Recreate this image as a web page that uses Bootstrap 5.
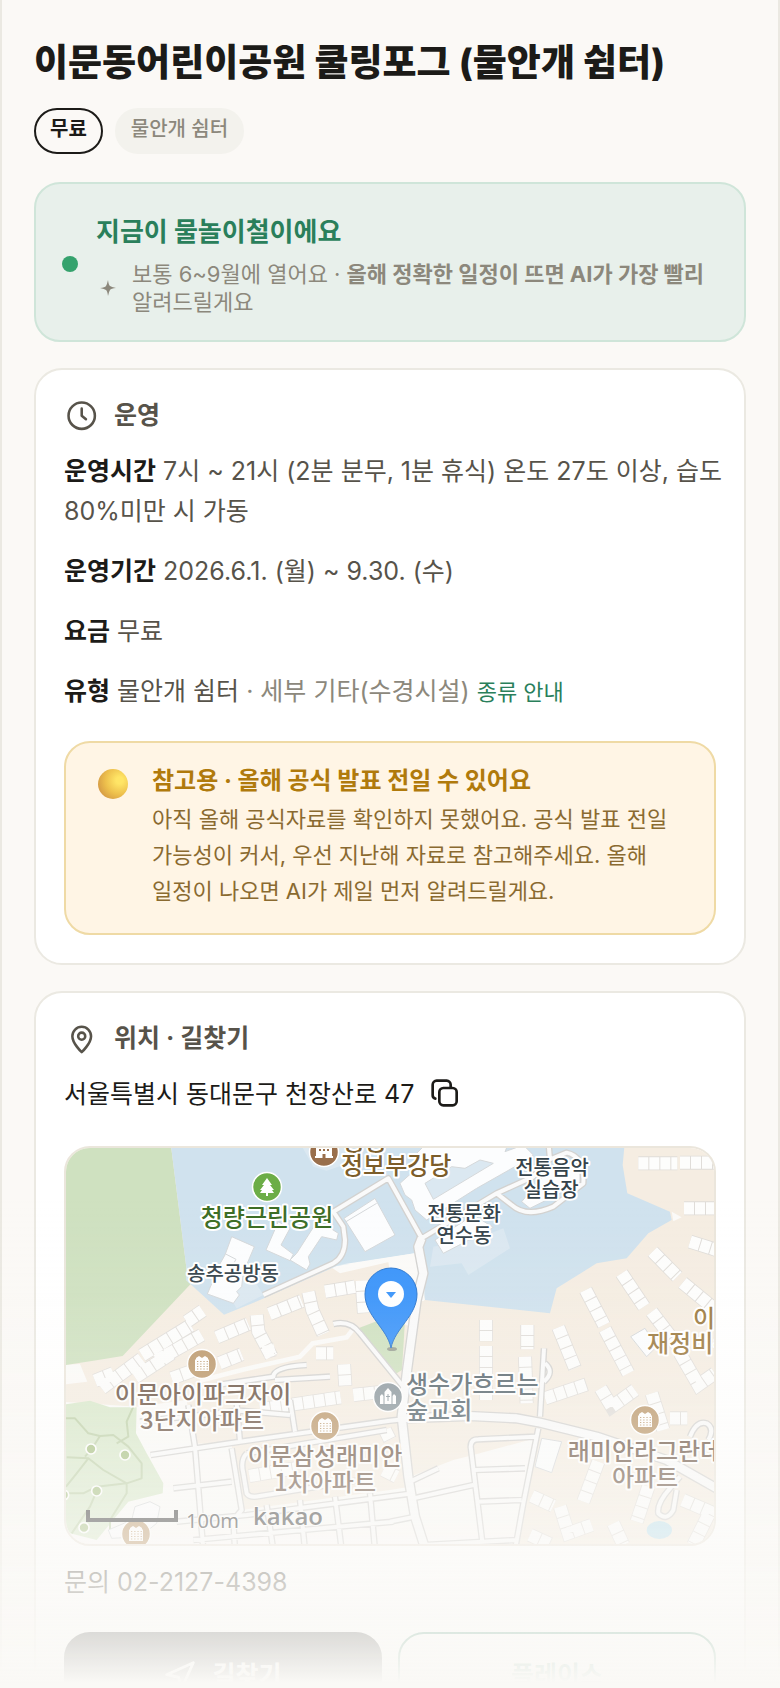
<!DOCTYPE html>
<html lang="ko">
<head>
  <meta charset="UTF-8">
  <meta name="viewport" content="width=device-width, initial-scale=1.0">
  <title>이문동어린이공원 쿨링포그</title>
  <link href="https://cdn.jsdelivr.net/npm/bootstrap@5.3.0/dist/css/bootstrap.min.css" rel="stylesheet">
  <style>
    body { background: #fbf9f6; color: #1c1b18; font-family: Inter, "Noto Sans CJK KR", sans-serif; word-break: keep-all; }
    .sheet { height: 100vh; overflow: hidden; border: solid #ebe9e2; border-width: 0 2px; padding: 33px 32px 0; }
    .sheet h1 { font-size: 37px; line-height: 60px; font-weight: 800; margin-bottom: 15px; }
    .ink { color: #1c1b18; }
    .soft { color: #8c887c; }

    .chip { height: 46px; padding: 0 14px; line-height: 39px; font-size: 20px; border-radius: 23px; border: 2px solid #f3f2ed; background: #f3f2ed; color: #8c887c; font-weight: 500; }
    .chip-free { border-color: #1c1b18; background: transparent; color: #1c1b18; font-weight: 700; }

    .season { background: #e8f0eb; border: 2px solid #cfe5d9; border-radius: 26px; padding: 28px 26px 24px; gap: 18px; margin: 28px 0 26px; }
    .season h2 { color: #2a7f5b; font-size: 26px; line-height: 40px; font-weight: 700; margin-bottom: 8px; }
    .season p { color: #8c887c; font-size: 22px; line-height: 28px; }
    .season p b { font-weight: 700; }
    .dot { width: 16px; height: 16px; border-radius: 50%; background: #35a26d; }

    .panel { background: #fff; border: 2px solid #ebe9e2; border-radius: 28px; padding: 29px 28px 28px; margin-bottom: 26px; font-size: 25px; line-height: 40px; color: #57534a; }
    .panel-title { gap: 16px; height: 32px; margin-bottom: 20px; }
    .panel-title h2 { font-size: 25px; line-height: 32px; font-weight: 700; margin: 0; }
    .facts { margin: 0 -8px 29px 0; }
    .facts p { margin-bottom: 20px; }
    .facts a { color: #2a7f5b; font-size: 22px; text-decoration: none; }

    .notice { background: #fff5e5; border: 2px solid #efdaa5; border-radius: 26px; padding: 20px 24px 24px 32px; gap: 24px; }
    .notice h3 { color: #b07a0c; font-size: 24px; line-height: 36px; font-weight: 700; margin-bottom: 2px; }
    .notice p { color: #8a6a30; font-size: 22px; line-height: 36px; }
    .orb { width: 30px; height: 30px; margin-top: 6px; border-radius: 50%; background: radial-gradient(circle at 72% 38%, #ffe566 0 12%, #edbf4c 50%, #d9a146 75%, #d98b60 100%); }

    .map-box { height: 400px; margin-top: 32px; border: 2px solid #ebe6dc; border-radius: 26px; overflow: hidden; }
    .map-box svg { width: 100%; height: 100%; }
    .map-box text { font-family: "Noto Sans CJK KR", sans-serif; font-weight: 500; paint-order: stroke; stroke: #fff; stroke-width: 4px; stroke-linejoin: round; }
    .t-lg { font-size: 24px; }
    .t-md { font-size: 20px; }
    .map-box .t-scale { font-family: "Noto Sans", sans-serif; font-weight: 400; font-size: 20px; stroke-width: 2px; }
    .map-box .t-brand { font-family: "Open Sans", sans-serif; font-weight: 600; font-size: 24px; stroke-width: 2px; }

    .action { height: 88px; font-size: 25px; font-weight: 700; border-radius: 26px; border: 2px solid #2a7f5b; color: #2a7f5b; }
    .action-dark, .action-dark:hover { background: #1c1b18; border-color: #1c1b18; color: #fff; }
    .fade-out { height: 490px; pointer-events: none; background: linear-gradient(rgba(250,249,246,0), rgba(250,249,246,.06) 20%, rgba(250,249,246,.25) 41%, rgba(250,249,246,.58) 65%, rgba(250,249,246,.87) 89%, #faf9f6 99%); }
  </style>
</head>
<body>
  <main class="sheet">
    <h1>이문동어린이공원 쿨링포그 (물안개 쉼터)</h1>
    <div class="d-flex" style="gap: 12px">
      <span class="chip chip-free">무료</span>
      <span class="chip">물안개 쉼터</span>
    </div>

    <!-- 시즌 안내 -->
    <section class="season d-flex align-items-center">
      <span class="dot flex-shrink-0"></span>
      <div>
        <h2>지금이 물놀이철이에요</h2>
        <div class="d-flex align-items-center gap-3">
          <svg class="flex-shrink-0 ms-1" width="16" height="16" viewBox="0 0 16 16" fill="#8c887c" aria-hidden="true"><path d="M8 0Q8.600 5 10 6T16 8Q11 8.600 10 10T8 16Q7.400 11 6 10T0 8Q5 7.400 6 6T8 0z"/></svg>
          <p class="mb-0">보통 6~9월에 열어요 · <b>올해 정확한 일정이 뜨면 AI가 가장 빨리</b> 알려드릴게요</p>
        </div>
      </div>
    </section>

    <!-- 운영 -->
    <section class="panel">
      <div class="panel-title d-flex align-items-center">
        <svg width="34" height="34" viewBox="0 0 24 24" fill="none" stroke="#57534a" stroke-width="1.8" stroke-linecap="round" stroke-linejoin="round" aria-hidden="true"><circle cx="12.500" cy="12.500" r="9.300"/><path d="M12.500 7.500v5l3 2.500"/></svg>
        <h2>운영</h2>
      </div>
      <div class="facts">
        <p><b class="ink">운영시간</b> 7시 ~ 21시 (2분 분무, 1분 휴식) 온도 27도 이상, 습도 80%미만 시 가동</p>
        <p><b class="ink">운영기간</b> 2026.6.1. (월) ~ 9.30. (수)</p>
        <p><b class="ink">요금</b> 무료</p>
        <p class="mb-0"><b class="ink">유형</b> 물안개 쉼터 <span class="soft">· 세부 기타(수경시설)</span> <a href="#types">종류 안내</a></p>
      </div>
      <div class="notice d-flex align-items-start">
        <span class="orb flex-shrink-0"></span>
        <div>
          <h3>참고용 · 올해 공식 발표 전일 수 있어요</h3>
          <p class="mb-0">아직 올해 공식자료를 확인하지 못했어요. 공식 발표 전일 가능성이 커서, 우선 지난해 자료로 참고해주세요. 올해 일정이 나오면 AI가 제일 먼저 알려드릴게요.</p>
        </div>
      </div>
    </section>

    <!-- 위치 · 길찾기 -->
    <section class="panel">
      <div class="panel-title d-flex align-items-center">
        <svg width="34" height="34" viewBox="0 0 24 24" fill="none" stroke="#57534a" stroke-width="1.8" stroke-linejoin="round" aria-hidden="true"><path d="M12.500 22s6.600-6.200 6.600-11.300a6.600 6.600 0 1 0-13.200 0C5.900 15.800 12.500 22 12.500 22z"/><circle cx="12.500" cy="10.700" r="2.500"/></svg>
        <h2>위치 · 길찾기</h2>
      </div>
      <div class="d-flex align-items-center ink">
        <span>서울특별시 동대문구 천장산로 47</span>
        <button type="button" class="btn border-0 p-0 ms-3 d-flex" aria-label="주소 복사">
          <svg width="32" height="32" viewBox="0 0 24 24" fill="none" stroke="#1c1b18" stroke-width="2" stroke-linecap="round" stroke-linejoin="round" aria-hidden="true"><rect x="7" y="7.500" width="13" height="13" rx="3"/><path d="M4 15.500A2.500 2.500 0 0 1 2 13V5a3 3 0 0 1 3-3h7.500a3 3 0 0 1 3 3v2"/></svg>
        </button>
      </div>

      <div class="map-box">
        <svg viewBox="2 2 648 396" preserveAspectRatio="xMidYMid slice" role="img" aria-label="지도">
          <defs>
            <g id="apt">
              <circle r="14.500" fill="#bb976a" stroke="#fff" stroke-width="1.500"/>
              <path d="M-7 7V-4l1-1v-1l3-2 3 2 3-2 3 2v1l1 1V7z" fill="#fff"/>
              <path d="M-5-2.500H6M-5 0H6M-5 2.500H6M-5 5H6" stroke="#bb976a" stroke-width="1.200" stroke-dasharray="1.300 1.900"/>
            </g>
            <path id="lots" d="M246 646L392 556M380 545L428 512M290 662L425 585M470 592L565 552M590 525L595 575 635 650M628 522L725 483M745 456L757 510 790 582M795 455L885 440M905 422L912 520M768 640H820M105 722L160 700M125 745L245 656M225 712L335 640M335 715L405 690M478 670L545 643M610 638L645 628M600 808L842 772M852 673L856 738M880 765L972 755M568 1008L705 985M975 870L990 900M970 990L1010 1010M1735 70H1852M1860 68H1970M1872 205H1970M1890 305L1970 330M1778 335L1852 410M1868 428L1970 512M1685 400L1752 500M1577 450L1632 555M1775 515L1870 640M1635 568L1705 700M1278 540V604M1278 618V780M1402 555V628M1495 562L1545 685M1395 650L1400 790M1455 775L1580 733M1622 745L1655 800 1725 750M1775 760L1810 870M1830 835H1882M1860 640L1915 735 1965 700M1615 965L1570 1085M1765 1040L1730 1145M1415 1068L1480 1098M1500 1100L1525 1180 1595 1155M1410 1185L1470 1212M1660 1150L1690 1215M1868 1080L1950 1115 1900 1215"/>
            <path id="streets" d="M610 465L820 370Q855 350 855 300L850 260 820 215 985 115 1085 295 1310 160 1420 110 1465 60 1520 38Q1575 50 1570 130L1480 200Q1400 235 1355 195L1310 160M1465 0L1470 60M820 552Q870 540 900 580L1030 740M1452 625L1440 830M1455 670Q1485 695 1452 725M1435 865L1390 1090 1365 1230M1425 890L1255 898Q1232 898 1232 920L1270 1230M1245 990L1395 985M1255 1085L1385 1080M1060 1075L1240 1035M1050 1025L1135 985M990 1145L1065 1130M1090 1215L1370 1200M470 735L640 710Q640 680 740 675M645 720L810 710M385 795L405 920 430 1230M272 945L540 905 990 842 1030 838M340 1045L515 1025M515 925L545 1110 520 1140 525 1230M530 790L540 905M690 780L705 875M240 845L540 812 690 825M560 940L650 925 980 870M560 940Q540 960 550 1000L560 1060Q570 1075 600 1068L900 1020M620 1095L640 1230M720 1080L735 1230M825 1070L845 1230M930 1060L945 1230M350 1145L560 1125 1060 1060M400 1200L1000 1145M1890 890Q1910 840 1940 850 1965 865 1945 900M1860 1010L1830 1045Q1790 1090 1795 1120 1820 1145 1840 1110L1850 1050"/>
            <path id="avenues" d="M1085 295L1075 320 1090 400 1070 480 1040 700 1025 830 1045 1010 1065 1130 1100 1240M1030 835L1230 828 1370 835 1440 848 1610 890 1820 960 1970 1045"/>
          </defs>
          <g transform="translate(-4 -6) scale(.33333)">
            <!-- 바탕 -->
            <path fill="#f5ede2" d="M0 0H2000V1250H0z"/>
            <path fill="#fbfaf8" d="M0 785L230 800 380 780 400 910 515 915 545 1110 990 1050 1050 1040 1050 1010 1180 960 1240 945 1425 895 1370 1230 0 1230zM0 675L60 672 82 725 0 735z"/>
            <path fill="#fbfaf8" d="M800 372L1075 336 1095 480 1074 484 1060 400 990 365 840 400zM985 365L1075 340 1095 480 1070 490 1050 560 1010 540zM1835 215L1865 232 1840 244z"/>
            <path fill="none" stroke="#fbfaf8" stroke-width="14" d="M420 722L545 690 720 650 758 610 860 592 885 560"/>
            <path fill="#cfe1c0" d="M0 0H333L333 18 380 390 378 420 392 432 188 648 100 662 0 678z"/>
            <path fill="#d0e2ee" d="M333 0V18L380 390 378 420 492 524 600 480 830 378 1075 338 1095 480 1470 520 1490 445 1610 370 1700 355 1765 280 1835 240 1830 215 1702 160 1688 75 1695 0z"/>
            <path fill="#fbfaf8" d="M840 374L1073 338 1095 410 1092 482 1060 484 1055 400 990 365z"/>
            <path fill="#dbe8f1" d="M1110 380L1205 370 1225 405 1350 325 1330 265 1240 300 1120 320zM570 400L610 465 530 505 490 440zM715 0L760 80 800 92 850 75 870 0z"/>
            <path fill="#cfe1c0" d="M895 565L985 530 1035 540 1026 690 1010 700z"/>
            <path fill="#d8e8ca" d="M0 795L90 782 150 802 230 802 228 880 260 940 310 1030 308 1060 205 1085 110 1200 30 1180 0 1190z"/>
            <path fill="none" stroke="#bccfa6" stroke-width="6" stroke-linejoin="round" d="M18 835H45L85 880 120 888 160 885 205 920 245 970V1015L200 1030 130 990 85 955 20 952M120 888L95 927 75 950M220 800L200 845 205 890 170 910M18 1060H70L110 1040 200 1030V1060L150 1140 150 1170M85 955L50 1000 18 1040M110 1053L90 1100 35 1180"/>
            <g fill="#a5bf80" stroke="#fff" stroke-width="5"><circle cx="93" cy="927" r="15"/><circle cx="195" cy="945" r="15"/><circle cx="110" cy="1053" r="15"/><circle cx="72" cy="1163" r="15"/><circle cx="12" cy="1065" r="14"/></g>
            <ellipse cx="1798" cy="1170" rx="38" ry="27" fill="#b9dfec"/>

            <!-- 큰 건물 -->
            <g fill="#fcfdfe" stroke="#d5d8da" stroke-width="3">
              <path d="M515 290L583 320 550 398 545 440 530 455 538 465 520 490 442 462 460 420 475 380 495 345z"/>
              <path d="M497 342L528 358 520 372" fill="none"/>
              <path d="M655 245L690 265 663 315 700 343 690 362 618 330z"/>
              <path d="M780 245L835 280 830 300 785 290 745 350 750 372 740 390 690 360 710 340 760 262z"/>
              <path d="M852 235L945 175 1005 285 915 335zM858 245L950 190"/>
              <path d="M1020 130L1065 90 1065 45 1110 0 1350 0 1335 35 1390 15 1420 45 1400 60 1250 145 1100 240 1065 210 1055 180 1035 165z"/>
              <path d="M1095 130L1175 80 1215 85 1260 60 1300 70 1120 178z" fill="#dbe8f1"/>
              <path d="M1125 300L1240 225 1300 262 1150 340z"/>
              <path d="M1385 185L1410 205 1560 130 1560 80 1500 60 1440 120z"/>
              <path d="M1445 895L1505 905 1475 998 1425 980zM1712 590L1755 565 1790 620 1760 650z"/>
              <path d="M145 1170L215 1140 225 1100 270 1085 300 1100 290 1150 240 1190 155 1195z"/>
            </g>

            <!-- 주택 필지 -->
            <g fill="none">
              <use href="#lots" stroke="#e0ddd9" stroke-width="42"/>
              <use href="#lots" stroke="#fdfdfc" stroke-width="37" stroke-dasharray="30 3"/>
            </g>

            <!-- 도로 -->
            <g fill="none" stroke-linejoin="round">
              <g stroke="#d3d2d0"><use href="#streets" stroke-width="20"/><use href="#avenues" stroke-width="32"/></g>
              <g stroke="#fafafa"><use href="#streets" stroke-width="12"/><use href="#avenues" stroke-width="24"/></g>
            </g>
          </g>

          <!-- 장소 표시 -->
          <circle cx="260" cy="6" r="14.500" fill="#996f4c" stroke="#fff" stroke-width="1.500"/>
          <path d="M251 12h18v-2h-1V2h1V0h-3v-3h-3v3h-6v-3h-3v3h-3v2h1v8h-1zM255 3h2v2h-2zM259 3h2v2h-2zM263 3h2v2h-2zM258.500 12V8h3v4z" fill="#fff" fill-rule="evenodd"/>
          <circle cx="203" cy="41" r="14.500" fill="#6cad47" stroke="#fff" stroke-width="1.500"/>
          <path d="M203 32l5 7h-2l4 5h-2l2 3h-6v3h-2v-3h-6l2-3h-2l4-5h-2z" fill="#fff"/>
          <use href="#apt" x="138" y="218"/>
          <use href="#apt" x="261" y="280"/>
          <use href="#apt" x="581" y="274"/>
          <use href="#apt" x="72" y="388"/>
          <circle cx="324" cy="251" r="14.500" fill="#8c989e" stroke="#fff" stroke-width="1.500"/>
          <path d="M316 258v-8l2-2 1.500 2v8zM332 258v-8l-2-2-1.500 2v8zM320.500 258v-12l3.500-4 3.500 4v12z" fill="#fff"/>
          <path d="M324 248v7M322 250.500h4" stroke="#8c989e"/>

          <g fill="#7c5d2a" class="t-lg"><text x="279" y="4">공공</text><text x="277" y="28">정보부강당</text></g>
          <text x="203" y="80" text-anchor="middle" fill="#3c6d25" class="t-lg">청량근린공원</text>
          <g fill="#35434b" class="t-md" text-anchor="middle">
            <text x="169" y="135">송추공방동</text>
            <text x="488" y="29">전통음악</text><text x="487" y="51">실습장</text>
            <text x="400" y="75">전통문화</text><text x="400" y="97">연수동</text>
          </g>
          <g fill="#9c7a3f" class="t-lg"><text x="629" y="181">이</text><text x="583" y="206">재정비촉</text></g>
          <g fill="#6a5242" class="t-lg" text-anchor="middle">
            <text x="139" y="257">이문아이파크자이</text><text x="138" y="283">3단지아파트</text>
            <text x="261" y="319">이문삼성래미안</text><text x="261" y="345">1차아파트</text>
            <text x="581" y="314">래미안라그란데</text><text x="581" y="340">아파트</text>
          </g>
          <g fill="#56656d" class="t-lg"><text x="342" y="247">생수가흐르는</text><text x="342" y="273">숲교회</text></g>

          <!-- 핀 -->
          <ellipse cx="328" cy="203" rx="5" ry="2" fill="#777" opacity=".6"/>
          <path d="M327 202C323 182 301 170 301 148a26 26 0 0 1 52 0C353 170 331 182 327 202z" fill="#3a94fa" stroke="#2a76cf"/>
          <circle cx="327" cy="148" r="13" fill="#fff"/>
          <path d="M322 146h10l-5 6z" fill="#3a94fa"/>

          <!-- 축척 -->
          <path d="M24 364V374H112V364" fill="none" stroke="#333" stroke-width="4"/>
          <text x="122" y="382" fill="#333" class="t-scale">100m</text>
          <text x="189" y="379" fill="#333" class="t-brand">kakao</text>
        </svg>
      </div>

      <p class="mt-3 mb-0">문의 02-2127-4398</p>
      <div class="d-flex gap-3" style="margin-top: 30px">
        <button type="button" class="btn action action-dark flex-fill w-50 d-flex align-items-center justify-content-center gap-3">
          <svg width="32" height="32" viewBox="0 0 24 24" fill="none" stroke="currentColor" stroke-width="2" stroke-linejoin="round" aria-hidden="true"><path d="M2 11L22 2 13 22 11 13z"/></svg>
          길찾기
        </button>
        <button type="button" class="btn action flex-fill w-50">플레이스</button>
      </div>
    </section>
  </main>
  <div class="fade-out position-fixed bottom-0 start-0 end-0"></div>
  <script src="https://cdn.jsdelivr.net/npm/bootstrap@5.3.0/dist/js/bootstrap.bundle.min.js"></script>
</body>
</html>
